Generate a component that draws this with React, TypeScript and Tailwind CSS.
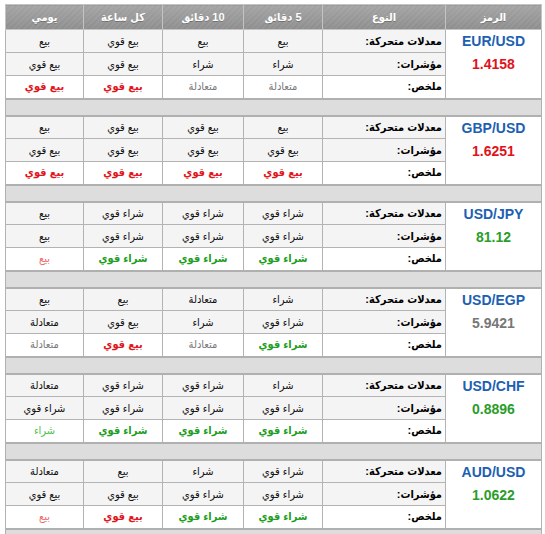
import React from 'react';

type Signal = 'بيع' | 'بيع قوي' | 'شراء' | 'شراء قوي' | 'متعادلة';

interface PairRow {
  symbol: string;
  price: string;
  trend: 'up' | 'down' | 'flat';
  ma: Signal[];
  indicators: Signal[];
  summary: Signal[];
}

// order inside each array: 5 min, 10 min, hourly, daily
const pairs: PairRow[] = [
  {
    symbol: 'EUR/USD',
    price: '1.4158',
    trend: 'down',
    ma: ['بيع', 'بيع', 'بيع قوي', 'بيع'],
    indicators: ['شراء', 'شراء', 'بيع قوي', 'بيع قوي'],
    summary: ['متعادلة', 'متعادلة', 'بيع قوي', 'بيع قوي'],
  },
  {
    symbol: 'GBP/USD',
    price: '1.6251',
    trend: 'down',
    ma: ['بيع', 'بيع قوي', 'بيع قوي', 'بيع'],
    indicators: ['بيع قوي', 'بيع قوي', 'بيع قوي', 'بيع قوي'],
    summary: ['بيع قوي', 'بيع قوي', 'بيع قوي', 'بيع قوي'],
  },
  {
    symbol: 'USD/JPY',
    price: '81.12',
    trend: 'up',
    ma: ['شراء قوي', 'شراء قوي', 'شراء قوي', 'بيع'],
    indicators: ['شراء قوي', 'شراء قوي', 'شراء قوي', 'بيع'],
    summary: ['شراء قوي', 'شراء قوي', 'شراء قوي', 'بيع'],
  },
  {
    symbol: 'USD/EGP',
    price: '5.9421',
    trend: 'flat',
    ma: ['شراء', 'متعادلة', 'بيع', 'بيع'],
    indicators: ['شراء قوي', 'شراء', 'بيع قوي', 'متعادلة'],
    summary: ['شراء قوي', 'متعادلة', 'بيع قوي', 'متعادلة'],
  },
  {
    symbol: 'USD/CHF',
    price: '0.8896',
    trend: 'up',
    ma: ['شراء', 'شراء قوي', 'شراء قوي', 'متعادلة'],
    indicators: ['شراء قوي', 'شراء قوي', 'شراء قوي', 'شراء قوي'],
    summary: ['شراء قوي', 'شراء قوي', 'شراء قوي', 'شراء'],
  },
  {
    symbol: 'AUD/USD',
    price: '1.0622',
    trend: 'up',
    ma: ['شراء قوي', 'شراء', 'بيع', 'متعادلة'],
    indicators: ['شراء قوي', 'شراء قوي', 'بيع قوي', 'بيع قوي'],
    summary: ['شراء قوي', 'شراء قوي', 'بيع قوي', 'بيع'],
  },
];

const headers = ['الرمز', 'النوع', '5 دقائق', '10 دقائق', 'كل ساعة', 'يومي'];
const colWidths = ['w-[96px]', 'w-[123px]', 'w-[79px]', 'w-[81px]', 'w-[79px]', 'w-[78px]'];

const summaryColor: Record<Signal, string> = {
  'بيع قوي': 'text-[#e3141b] font-bold',
  'بيع': 'text-[#f26a6a]',
  'شراء قوي': 'text-[#1f9e1f] font-bold',
  'شراء': 'text-[#4cc34c]',
  'متعادلة': 'text-[#7a7a7a]',
};

const priceColor = {
  up: 'text-[#2a9d2a]',
  down: 'text-[#e0131b]',
  flat: 'text-[#777777]',
};

const cell = 'border border-[#b3b3b3] h-[23px] p-0 text-[11px] leading-none text-center';

function PairBlock({ pair }: { pair: PairRow }) {
  return (
    <>
      <tr className="bg-[#f4f4f4]">
        <td rowSpan={3} className="border border-[#b3b3b3] bg-white p-0 align-top text-center">
          <div className="pt-[3px] text-[14px] font-bold leading-[16px] text-[#1d5fb3]">{pair.symbol}</div>
          <div className={`mt-[7px] text-[14px] font-bold leading-[16px] ${priceColor[pair.trend]}`}>{pair.price}</div>
        </td>
        <td className={`${cell} text-right pr-[3px] font-bold text-black`}>معدلات متحركة:</td>
        {pair.ma.map((s, i) => (
          <td key={i} className={`${cell} text-[#111]`}>{s}</td>
        ))}
      </tr>
      <tr className="bg-[#f4f4f4]">
        <td className={`${cell} text-right pr-[3px] font-bold text-black`}>مؤشرات:</td>
        {pair.indicators.map((s, i) => (
          <td key={i} className={`${cell} text-[#111]`}>{s}</td>
        ))}
      </tr>
      <tr className="bg-white">
        <td className={`${cell} text-right pr-[3px] font-bold text-black`}>ملخص:</td>
        {pair.summary.map((s, i) => (
          <td key={i} className={`${cell} ${summaryColor[s]}`}>{s}</td>
        ))}
      </tr>
      <tr>
        <td colSpan={6} className="h-[17px] border-y-2 border-x border-[#b0b0b0] bg-[#dddddd] p-0" />
      </tr>
    </>
  );
}

export default function App() {
  return (
    <div
      className="h-[534px] w-[545px] overflow-hidden bg-white pl-[5px] pt-[4px]"
      style={{ fontFamily: '"Liberation Sans", "DejaVu Sans Condensed", "DejaVu Sans", Arial, sans-serif' }}
    >
      <table dir="rtl" className="w-[536px] table-fixed border-collapse">
        <colgroup>
          {colWidths.map((w, i) => (
            <col key={i} className={w} />
          ))}
        </colgroup>
        <thead>
          <tr>
            {headers.map((h) => (
              <th
                key={h}
                className="h-[25px] border border-[#c4c4c4] bg-[repeating-linear-gradient(135deg,rgba(255,255,255,0.07)_0px,rgba(255,255,255,0.07)_2px,rgba(0,0,0,0)_2px,rgba(0,0,0,0)_4px),linear-gradient(#a3a3a3,#8c8c8c)] p-0 text-center text-[11px] font-bold leading-none text-white [text-shadow:0_1px_0_rgba(0,0,0,0.25)]"
              >
                {h}
              </th>
            ))}
          </tr>
        </thead>
        <tbody>
          {pairs.map((p) => (
            <PairBlock key={p.symbol} pair={p} />
          ))}
        </tbody>
      </table>
    </div>
  );
}
